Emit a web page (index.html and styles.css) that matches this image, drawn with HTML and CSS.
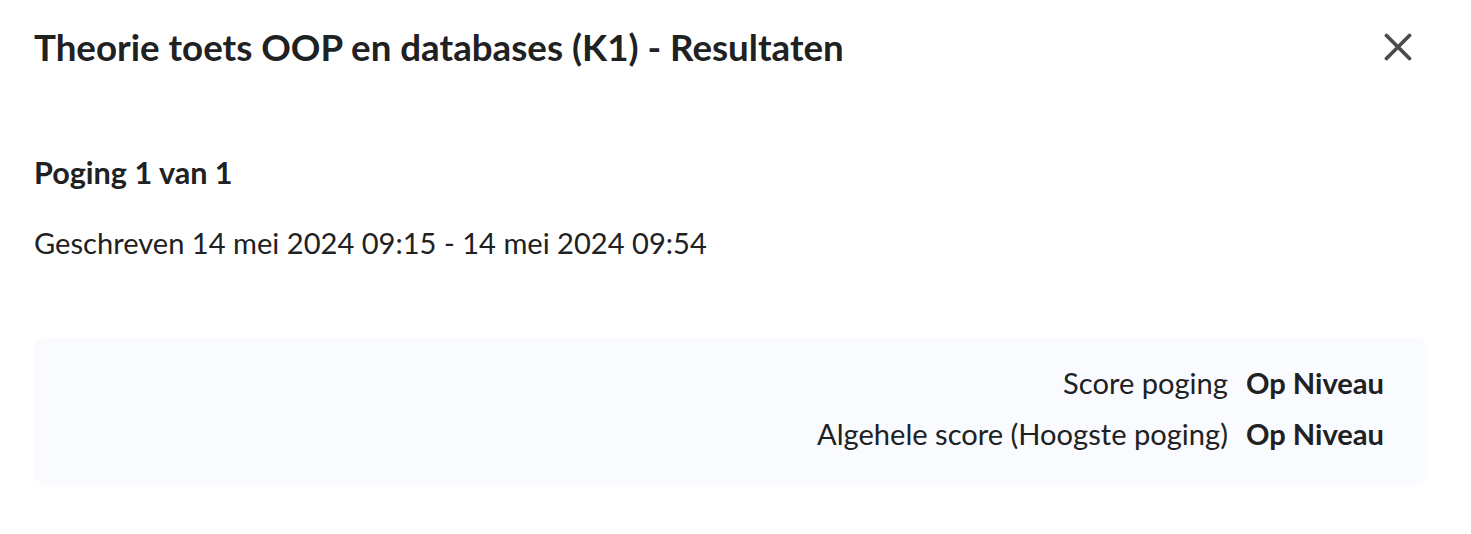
FILE: index.html
```html
<!DOCTYPE html>
<html lang="nl">
<head>
<meta charset="utf-8">
<link rel="stylesheet" href="styles.css">
</head>
<body>
<div class="dialog">
  <header class="head">
    <h1 class="title">Theorie toets OOP en databases (K1) - Resultaten</h1>
    <button class="close" aria-label="Sluiten">
      <svg width="28" height="28" viewBox="0 0 28 28"><path d="M2.5 2.5 L25.5 25.5 M25.5 2.5 L2.5 25.5" stroke="#494c4e" stroke-width="3.8" stroke-linecap="round" fill="none"/></svg>
    </button>
  </header>
  <h2 class="attempt">Poging 1 van 1</h2>
  <p class="written">Geschreven 14 mei 2024 09:15 - 14 mei 2024 09:54</p>
  <div class="scores">
    <div class="row"><span class="label">Score poging</span><span class="value">Op Niveau</span></div>
    <div class="row"><span class="label">Algehele score (Hoogste poging)</span><span class="value">Op Niveau</span></div>
  </div>
</div>
</body>
</html>
```
FILE: styles.css
```css
html, body { margin: 0; padding: 0; background: #fff; }
body { font-family: Lato, "Noto Sans", sans-serif; color: #202122; }
.dialog { padding: 0 43px 0 34px; }
.head { display: flex; justify-content: space-between; align-items: center; height: 93px; }
.title { margin: 0; font-size: 36.7px; font-weight: 700; line-height: 44px; }
.close { background: none; border: 0; padding: 0; width: 28px; height: 28px; margin-right: 16px; display: flex; }
.attempt { margin: 60px 0 0; font-size: 30.6px; font-weight: 700; line-height: 40px; }
.written { margin: 30px 0 0; font-size: 29.1px; line-height: 40px; }
.scores { margin-top: 75px; background: #f9fbff; border-radius: 12px; padding: 25px 44px 31px; display: flex; flex-direction: column; align-items: flex-end; gap: 11px; }
.row { display: flex; gap: 18px; font-size: 29.1px; line-height: 40px; }
.value { font-weight: 700; }
```
